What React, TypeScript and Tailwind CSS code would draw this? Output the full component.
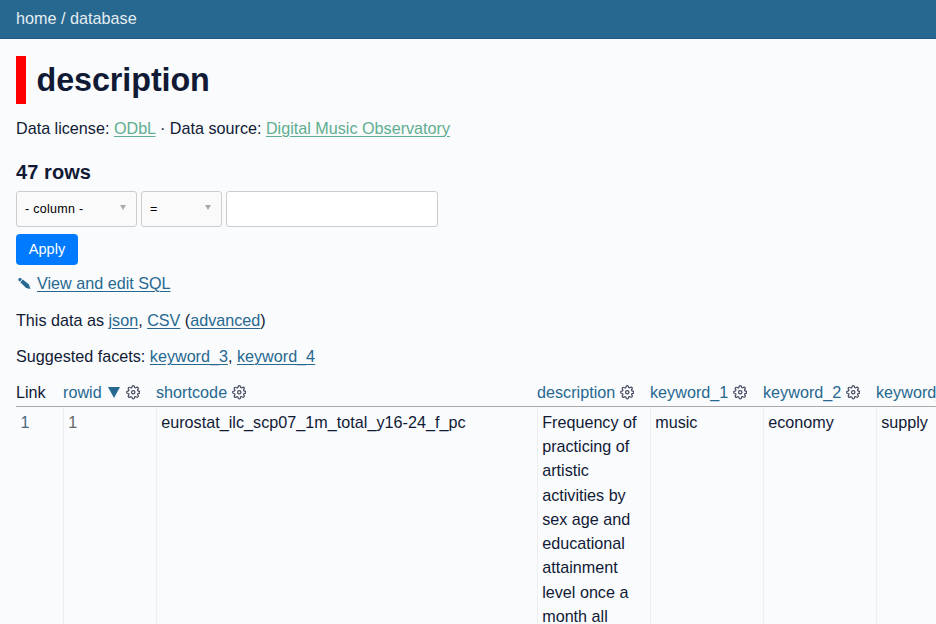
const link = "text-[#276890] underline decoration-1 underline-offset-2";
const green = "text-[#5fae90] underline decoration-1 underline-offset-2";
const columns = "grid grid-cols-[47px_93px_381px_113px_113px_113px_113px] w-[973px]";

function Gear({ className }: { className: string }) {
  return (
    <svg className={`${className} h-[14.500px] w-[14.500px] shrink-0 text-[#444a60]`} viewBox="0 0 24 24" fill="none" stroke="currentColor" strokeWidth="2" strokeLinecap="round" strokeLinejoin="round">
      <circle cx="12" cy="12" r="2.800" />
      <path d="M19.4 15a1.65 1.65 0 0 0 .33 1.82l.06.06a2 2 0 0 1 0 2.83 2 2 0 0 1-2.83 0l-.06-.06a1.65 1.65 0 0 0-1.82-.33 1.65 1.65 0 0 0-1 1.51V21a2 2 0 0 1-2 2 2 2 0 0 1-2-2v-.09A1.65 1.65 0 0 0 9 19.4a1.65 1.65 0 0 0-1.82.33l-.06.06a2 2 0 0 1-2.83 0 2 2 0 0 1 0-2.83l.06-.06a1.65 1.65 0 0 0 .33-1.82 1.65 1.65 0 0 0-1.51-1H3a2 2 0 0 1-2-2 2 2 0 0 1 2-2h.09A1.65 1.65 0 0 0 4.6 9a1.65 1.65 0 0 0-.33-1.82l-.06-.06a2 2 0 0 1 0-2.83 2 2 0 0 1 2.83 0l.06.06a1.65 1.65 0 0 0 1.82.33H9a1.65 1.65 0 0 0 1-1.51V3a2 2 0 0 1 2-2 2 2 0 0 1 2 2v.09a1.65 1.65 0 0 0 1 1.51 1.65 1.65 0 0 0 1.82-.33l.06-.06a2 2 0 0 1 2.83 0 2 2 0 0 1 0 2.83l-.06.06a1.65 1.65 0 0 0-.33 1.82V9a1.65 1.65 0 0 0 1.51 1H21a2 2 0 0 1 2 2 2 2 0 0 1-2 2h-.09a1.65 1.65 0 0 0-1.51 1z" />
    </svg>
  );
}

function Head({ name, sorted = false }: { name: string; sorted?: boolean }) {
  return (
    <div className="flex items-center whitespace-nowrap text-[#276890]">
      <span className="tracking-[0.02px]">{name}</span>
      {sorted && (
        <svg className="ml-[6px] h-[11px] w-[12px]" viewBox="0 0 12 11" fill="currentColor">
          <path d="M0 0h12L6 11z" />
        </svg>
      )}
      <Gear className={sorted ? "ml-[6px] mt-px" : "ml-[4.500px] mt-px"} />
    </div>
  );
}

function Select({ label, width }: { label: string; width: string }) {
  return (
    <button className={`${width} flex h-[35.5px] items-center justify-between rounded-[3px] border border-[#ccc] bg-[#fafafa] pl-2 pr-[10px] text-[12.500px] tracking-[0.3px] text-black`}>
      <span>{label}</span>
      <svg className="-mt-[4px] h-[5px] w-[6px]" viewBox="0 0 6 5" fill="#aaa">
        <path d="M0 0h6L3 5z" />
      </svg>
    </button>
  );
}

const cell = "border-l border-[#eee] pl-[4.200px] pt-[3px]";

export default function App() {
  return (
    <div className="h-[624px] w-[936px] overflow-hidden bg-[#f9fbfd] font-['Liberation_Sans',Arial,sans-serif] text-[16.16px] leading-[24.25px] text-[#111a35]">
      <header className="flex h-[39px] items-center border-b border-[#1d5782] bg-[#276890] px-4 text-[#e5edf1]">
        <nav className="-mt-px tracking-[0.02px]">home / database</nav>
      </header>
      <main className="px-4 pt-[16.500px]">
        <h1 className="flex h-[48.500px] items-center border-l-[10px] border-[red] pl-[10.500px] pt-px text-[32.320px] font-bold tracking-[-0.08px] text-[#111a35]">
          description
        </h1>
        <p className="mt-[11.500px]">
          Data license: <a className={green}>ODbL</a> · Data source: <a className={green}>Digital Music Observatory</a>
        </p>
        <h3 className="mt-[20.500px] text-[20px] font-bold leading-6 tracking-[0.08px]">47 rows</h3>
        <div className="mt-[7px] flex gap-1">
          <Select label="- column -" width="w-[121px]" />
          <Select label="=" width="w-[81px]" />
          <input className="h-[35.5px] w-[212px] rounded-[3px] border border-[#ccc] bg-white" />
        </div>
        <button className="mt-[7px] flex h-[31px] w-[62px] items-center justify-center rounded-[4px] bg-[#007bff] text-[14.5px] text-white">Apply</button>
        <p className="mt-[6px] flex items-center">
          <svg className="ml-[2px] mr-[6px] mt-[1px] h-[13px] w-[13px] text-[#276890]" viewBox="0 0 13 13" fill="currentColor">
            <path d="M.2 3 .8 1.300 2.700.9 4 2 1.700 4.700zM2.300 5.200 4.800 2.500 11 7.600 12.400 12 8.100 10.900z" />
          </svg>
          <a className={link}>View and edit SQL</a>
        </p>
        <p className="mt-[12.750px]">
          This data as <a className={link}>json</a>, <a className={link}>CSV</a> (<a className={link}>advanced</a>)
        </p>
        <p className="mt-3">
          Suggested facets: <a className={link}>keyword_3</a>, <a className={link}>keyword_4</a>
        </p>
        <section className="mt-[11.800px]">
          <div className={`${columns} border-b border-[#aaa] pb-[1.500px]`}>
            <div>Link</div>
            <Head name="rowid" sorted />
            <Head name="shortcode" />
            <Head name="description" />
            <Head name="keyword_1" />
            <Head name="keyword_2" />
            <Head name="keyword_3" />
          </div>
          <div className={columns}>
            <div className="pl-[4.500px] pt-[3px] text-[#4b6981]">1</div>
            <div className={`${cell} text-[#666]`}>1</div>
            <div className={`${cell} tracking-[0.02px]`}>eurostat_ilc_scp07_1m_total_y16-24_f_pc</div>
            <div className={cell}>Frequency of practicing of artistic activities by sex age and educational attainment level once a month all</div>
            <div className={cell}>music</div>
            <div className={cell}>economy</div>
            <div className={cell}>supply</div>
          </div>
        </section>
      </main>
    </div>
  );
}
